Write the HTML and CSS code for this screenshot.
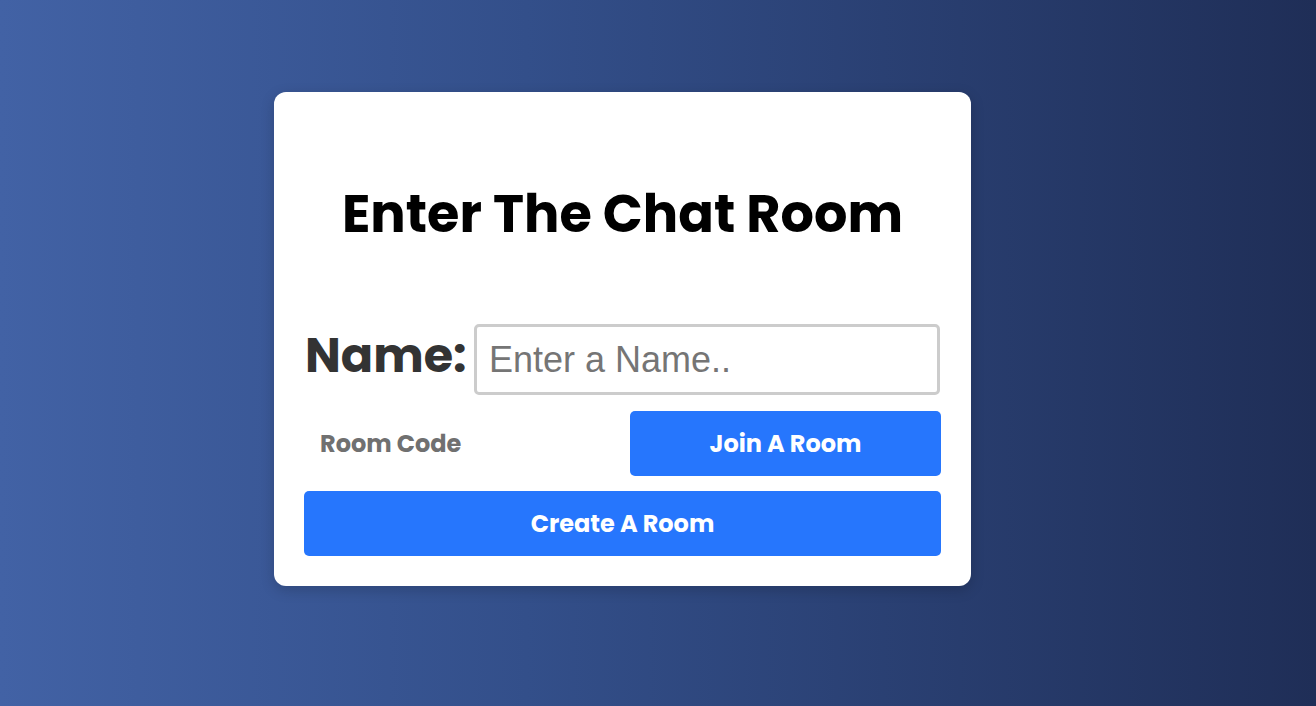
FILE: index.html
```html
<!DOCTYPE html>
<html lang="en">
<head>
<meta charset="utf-8">
<title>Chat Room</title>
<link rel="stylesheet" href="styles.css">
</head>
<body>
<div class="page">
  <form class="card">
    <h1 class="title">Enter The Chat Room</h1>
    <div class="name-row">
      <label class="name-label" for="name">Name:</label>
      <input class="name-input" id="name" type="text" placeholder="Enter a Name..">
    </div>
    <div class="join-row">
      <input class="code-input" type="text" placeholder="Room Code">
      <button class="btn join-btn" type="button">Join A Room</button>
    </div>
    <button class="btn create-btn" type="button">Create A Room</button>
  </form>
</div>
</body>
</html>
```
FILE: styles.css
```css
* { box-sizing: border-box; }
html, body {
  margin: 0;
  height: 100%;
}
body {
  font-family: Poppins, Inter, "Noto Sans", sans-serif;
  background: linear-gradient(to right, #4262a5 0%, #334f8a 40%, #1f2e57 100%);
}
.page {
  height: 706px;
  padding-top: 92px;
  padding-left: 274px;
}
.card {
  width: 697px;
  height: 494px;
  background: #fff;
  border-radius: 12px;
  padding: 30px;
  box-shadow: 0 4px 14px rgba(0, 0, 0, 0.18);
  display: flex;
  flex-direction: column;
}
.title {
  margin: 62px 0 80px;
  height: 60px;
  line-height: 60px;
  font-size: 52.5px;
  font-weight: 700;
  text-align: center;
  color: #000;
}
.name-row {
  display: flex;
  align-items: center;
  justify-content: space-between;
  height: 71px;
}
.name-label {
  font-size: 47.7px;
  line-height: 60px;
  font-weight: 700;
  color: #333;
  padding-left: 1px;
  padding-bottom: 8px;
}
.name-input {
  width: 466px;
  min-width: 0;
  height: 71px;
  margin-right: 1px;
  border: 3px solid #ccc;
  border-radius: 5px;
  padding: 0 12px;
  font-family: "Liberation Sans", Arial, sans-serif;
  font-size: 36px;
  color: #333;
  outline: none;
}
.name-input::placeholder { color: #757575; }
.join-row {
  display: flex;
  margin-top: 16px;
  height: 65px;
}
.code-input {
  flex: 1;
  min-width: 0;
  border: none;
  padding: 0 16px;
  font-family: inherit;
  font-size: 24px;
  font-weight: 700;
  color: #333;
  outline: none;
  background: transparent;
}
.code-input::placeholder { color: #707070; }
.btn {
  height: 65px;
  border: none;
  border-radius: 5px;
  background: #2676fd;
  color: #fff;
  font-family: inherit;
  font-size: 24px;
  font-weight: 700;
  cursor: pointer;
}
.join-btn { width: 311px; }
.create-btn {
  margin-top: 15px;
  width: 100%;
}
```
